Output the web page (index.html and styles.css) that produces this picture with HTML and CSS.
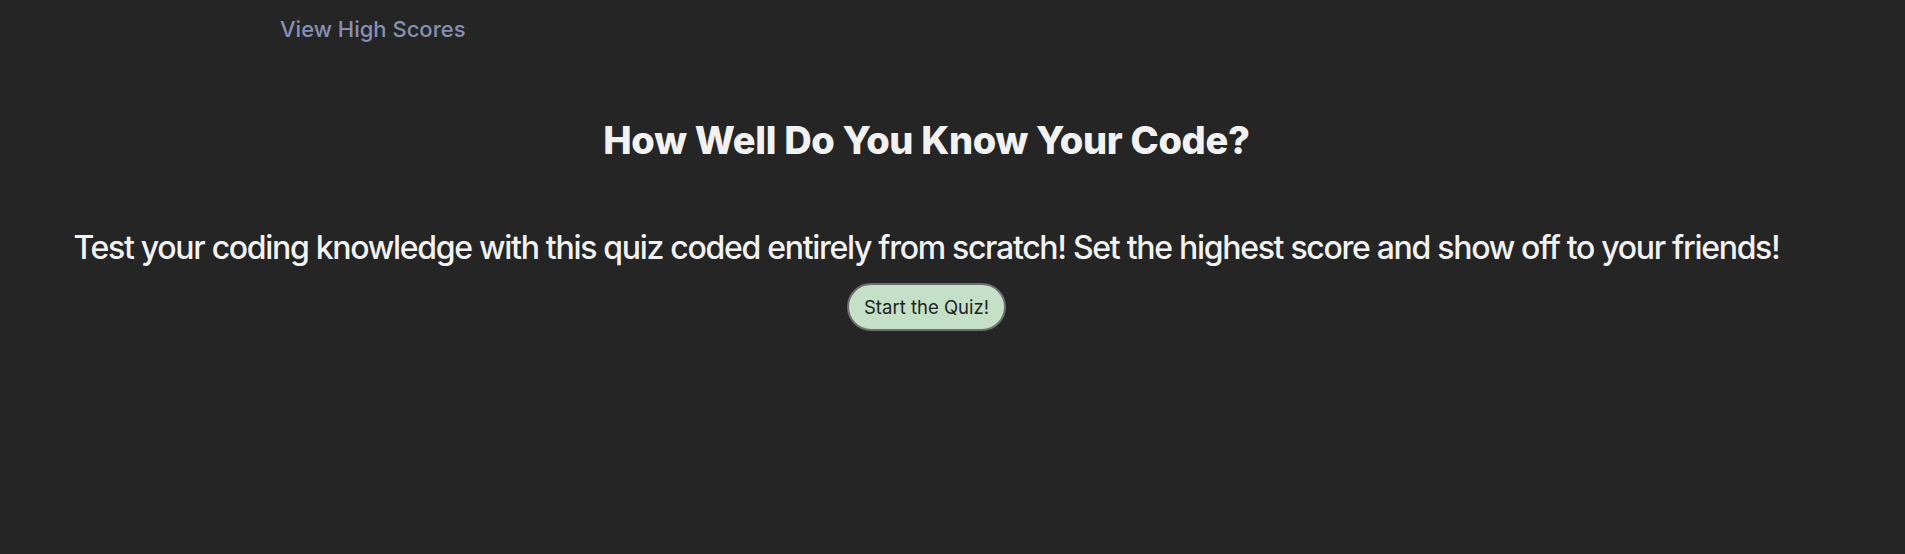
FILE: index.html
```html
<!DOCTYPE html>
<html lang="en">
<head>
<meta charset="utf-8">
<title>Code Quiz</title>
<link rel="stylesheet" href="styles.css">
</head>
<body>
<header class="top">
  <a class="scores" href="#">View High Scores</a>
</header>
<main class="intro">
  <h1 class="title">How Well Do You Know Your Code?</h1>
  <p class="lead">Test your coding knowledge with this quiz coded entirely from scratch! Set the highest score and show off to your friends!</p>
  <button class="start" type="button">Start the Quiz!</button>
</main>
</body>
</html>
```
FILE: styles.css
```css
html, body {
  margin: 0;
  padding: 0;
  background: #252525;
  color: #f2f2f2;
  font-family: Inter, "Liberation Sans", sans-serif;
}
.top {
  display: flex;
  padding: 16px 0 0 280px;
}
.scores {
  color: #8790b4;
  text-decoration: none;
  font-size: 22px;
  font-weight: 500;
}
.intro {
  display: flex;
  flex-direction: column;
  align-items: center;
  text-align: center;
  padding-right: 52px;
}
.title {
  font-size: 38px;
  font-weight: 800;
  letter-spacing: -0.3px;
  margin: 75px 0 0;
}
.lead {
  font-size: 32px;
  font-weight: 500;
  letter-spacing: -1.3px;
  margin: 65px 0 0;
}
.start {
  margin-top: 16px;
  background: #c4e0c7;
  color: #222;
  font-family: Inter, "Liberation Sans", sans-serif;
  font-size: 18.5px;
  border: 2px solid #6e6e6e;
  border-radius: 24px;
  padding: 11px 15px;
}
```
